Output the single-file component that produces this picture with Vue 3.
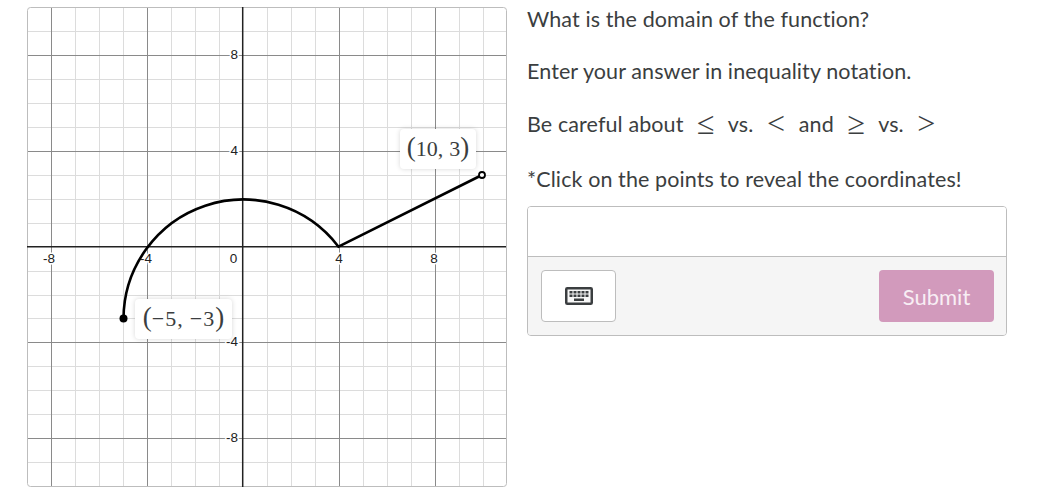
<script setup>
const sx = (v) => Math.round(216 + 23.95 * v) + 0.5;
const sy = (v) => Math.round(239.6 - 23.95 * v) + 0.5;
const xs = [];
for (let v = -8; v <= 10; v++) if (v !== 0) xs.push(v);
const ys = [];
for (let v = -9; v <= 9; v++) if (v !== 0) ys.push(v);
const minorX = xs.filter((v) => v % 4 !== 0).map(sx);
const minorY = ys.filter((v) => v % 4 !== 0).map(sy);
const majorX = xs.filter((v) => v % 4 === 0 && Math.abs(v) <= 8).map(sx);
const majorY = ys.filter((v) => v % 4 === 0).map(sy);
const xLabels = [
  { x: 22, text: '-8' },
  { x: 119, text: '-4' },
  { x: 312, text: '4' },
  { x: 407, text: '8' }
];
const yLabels = [
  { y: 52, text: '8' },
  { y: 148, text: '4' },
  { y: 339, text: '-4' },
  { y: 435, text: '-8' }
];
const keyCols = [4.5, 8.5, 12.5, 16.5, 20.5];
</script>

<template>
  <div class="page">
    <div class="graph">
      <svg width="480" height="480" viewBox="0 0 480 480">
        <g class="minor">
          <line v-for="p in minorX" :key="'mx' + p" :x1="p" y1="0" :x2="p" y2="480" />
          <line v-for="p in minorY" :key="'my' + p" x1="0" :y1="p" x2="480" :y2="p" />
        </g>
        <g class="major">
          <line v-for="p in majorX" :key="'jx' + p" :x1="p" y1="0" :x2="p" y2="480" />
          <line v-for="p in majorY" :key="'jy' + p" x1="0" :y1="p" x2="480" :y2="p" />
        </g>
        <rect class="frame" x="0.5" y="0.5" width="479" height="479" rx="3" />
        <g class="axis">
          <line x1="215.7" y1="0" x2="215.7" y2="480" />
          <line x1="0" y1="239.7" x2="479" y2="239.7" />
        </g>
        <g class="ticks">
          <text v-for="t in xLabels" :key="t.text + 'x'" :x="t.x" y="255.5" text-anchor="middle">{{ t.text }}</text>
          <text x="206.5" y="255.5" text-anchor="middle">0</text>
          <text v-for="t in yLabels" :key="t.text + 'y'" x="211" :y="t.y" text-anchor="end">{{ t.text }}</text>
        </g>
        <path class="curve" d="M 96.5 311.6 A 119.75 119.75 0 0 1 311.5 239.7 L 455 168" />
        <circle class="dot-closed" cx="96.5" cy="311.6" r="4" />
        <circle class="dot-open" cx="455" cy="168" r="3" />
      </svg>
      <div class="tip tip-left"><span class="paren">(</span><span class="wide">−5,</span><span class="gap"></span><span class="wide">−3</span><span class="paren">)</span></div>
      <div class="tip tip-right"><span class="paren">(</span>10,<span class="gap"></span>3<span class="paren">)</span></div>
    </div>

    <div class="side">
      <p class="line">What is the domain of the function?</p>
      <p class="line">Enter your answer in inequality notation.</p>
      <p class="line mixed">Be careful about <span class="sym">≤</span> vs. <span class="sym">&lt;</span> and <span class="sym">≥</span> vs. <span class="sym">&gt;</span></p>
      <p class="line">*Click on the points to reveal the coordinates!</p>

      <div class="answer">
        <div class="input"></div>
        <div class="bar">
          <button class="kbd-btn">
            <svg width="28" height="18" viewBox="0 0 28 18">
              <rect x="1.25" y="1.25" width="25.5" height="15.5" rx="1" fill="#f8f8f8" stroke="#3b3e40" stroke-width="2.5" />
              <g fill="#3b3e40">
                <rect v-for="x in keyCols" :key="'a' + x" :x="x" y="4" width="3" height="2.5" />
                <rect v-for="x in keyCols" :key="'b' + x" :x="x" y="7.5" width="3" height="2.5" />
                <rect x="9" y="11.5" width="10" height="2.5" />
              </g>
            </svg>
          </button>
          <button class="submit">Submit</button>
        </div>
      </div>
    </div>
  </div>
</template>

<style scoped>
.page {
  display: flex;
  align-items: flex-start;
  gap: 20px;
  padding: 7px 0 0 27px;
  font-family: Lato, sans-serif;
  color: #3b3e40;
}

.graph {
  position: relative;
  width: 480px;
  height: 480px;
  flex: none;
}

.graph svg {
  display: block;
}

.minor line {
  stroke: #dcdcdc;
  stroke-width: 1;
}

.major line {
  stroke: #8a8a8a;
  stroke-width: 1;
}

.frame {
  fill: none;
  stroke: #bdbdbd;
}

.axis line {
  stroke: #222;
  stroke-width: 1.5;
}

.ticks text {
  font-family: "Liberation Sans", sans-serif;
  font-size: 13.5px;
  fill: #222;
  stroke: #fff;
  stroke-width: 3px;
  paint-order: stroke;
}

.curve {
  fill: none;
  stroke: #000;
  stroke-width: 2.6;
}

.dot-closed {
  fill: #000;
}

.dot-open {
  fill: #fff;
  stroke: #000;
  stroke-width: 1.8;
}

.tip {
  position: absolute;
  display: flex;
  align-items: center;
  justify-content: center;
  height: 40px;
  background: #fff;
  border-radius: 4px;
  box-shadow: 0 0 5px rgba(0, 0, 0, 0.16);
  font-family: "Liberation Serif", serif;
  font-size: 22px;
  white-space: pre;
  color: #3b3e40;
}

.wide {
  letter-spacing: 1px;
}

.gap {
  width: 6px;
}

.paren {
  font-size: 27px;
  font-weight: 300;
  margin-top: -3px;
}

.tip-left {
  left: 108px;
  top: 292px;
  width: 97px;
}

.tip-right {
  left: 373px;
  top: 122px;
  width: 76px;
}

.side {
  width: 480px;
  flex: none;
  margin-top: -1px;
}

.line {
  margin: 0 0 26px;
  font-size: 21.5px;
  letter-spacing: 0.1px;
  line-height: 26px;
  white-space: pre-wrap;
}

.mixed {
  height: 26px;
  margin-top: 26px;
  margin-bottom: 30px;
}

.sym {
  font-family: "Liberation Serif", serif;
  font-size: 32px;
  line-height: 26px;
  vertical-align: -2px;
  margin: 0 8px;
}

.answer {
  width: 480px;
  height: 130px;
  box-sizing: border-box;
  margin-top: -12px;
  border: 1px solid #bdbdbd;
  border-radius: 4px;
  overflow: hidden;
}

.input {
  height: 49px;
  background: #fff;
  border-bottom: 1px solid #bdbdbd;
}

.bar {
  display: flex;
  justify-content: space-between;
  align-items: flex-start;
  height: 79px;
  box-sizing: border-box;
  padding: 13px 12px 0 13px;
  background: #f5f5f5;
}

.kbd-btn {
  width: 75px;
  height: 52px;
  padding: 0;
  background: #fff;
  border: 1px solid #bdbdbd;
  border-radius: 4px;
  display: flex;
  align-items: center;
  justify-content: center;
}

.submit {
  width: 115px;
  height: 52px;
  border: 0;
  border-radius: 4px;
  background: #d29abc;
  color: #f8eef4;
  font-family: Lato, sans-serif;
  font-size: 22px;
}
</style>
